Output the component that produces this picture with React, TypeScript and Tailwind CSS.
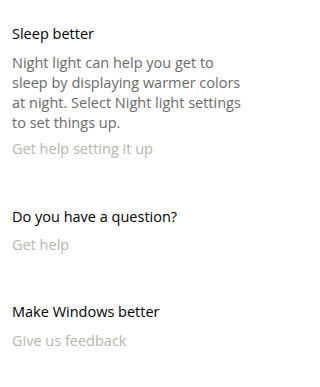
export default function App() {
  return (
    <div className="min-h-screen w-full bg-white pl-3 pt-[24px] text-[14.5px] leading-5 font-['Open_Sans',sans-serif]">
      <section>
        <h2 className="text-[#000000]">Sleep better</h2>
        <p className="mt-[9px] w-[232px] text-[#6b6b6b]">
          Night light can help you get to sleep by displaying warmer colors at night. Select Night light settings to set things up.
        </p>
        <a className="mt-[6px] block text-[#b6b6aa]">Get help setting it up</a>
      </section>
      <section className="mt-[48px]">
        <h2 className="text-[#000000]">Do you have a question?</h2>
        <a className="mt-[8px] block text-[#b6b6aa]">Get help</a>
      </section>
      <section className="mt-[47px]">
        <h2 className="text-[#000000]">Make Windows better</h2>
        <a className="mt-[9px] block text-[#b6b6aa]">Give us feedback</a>
      </section>
    </div>
  );
}
